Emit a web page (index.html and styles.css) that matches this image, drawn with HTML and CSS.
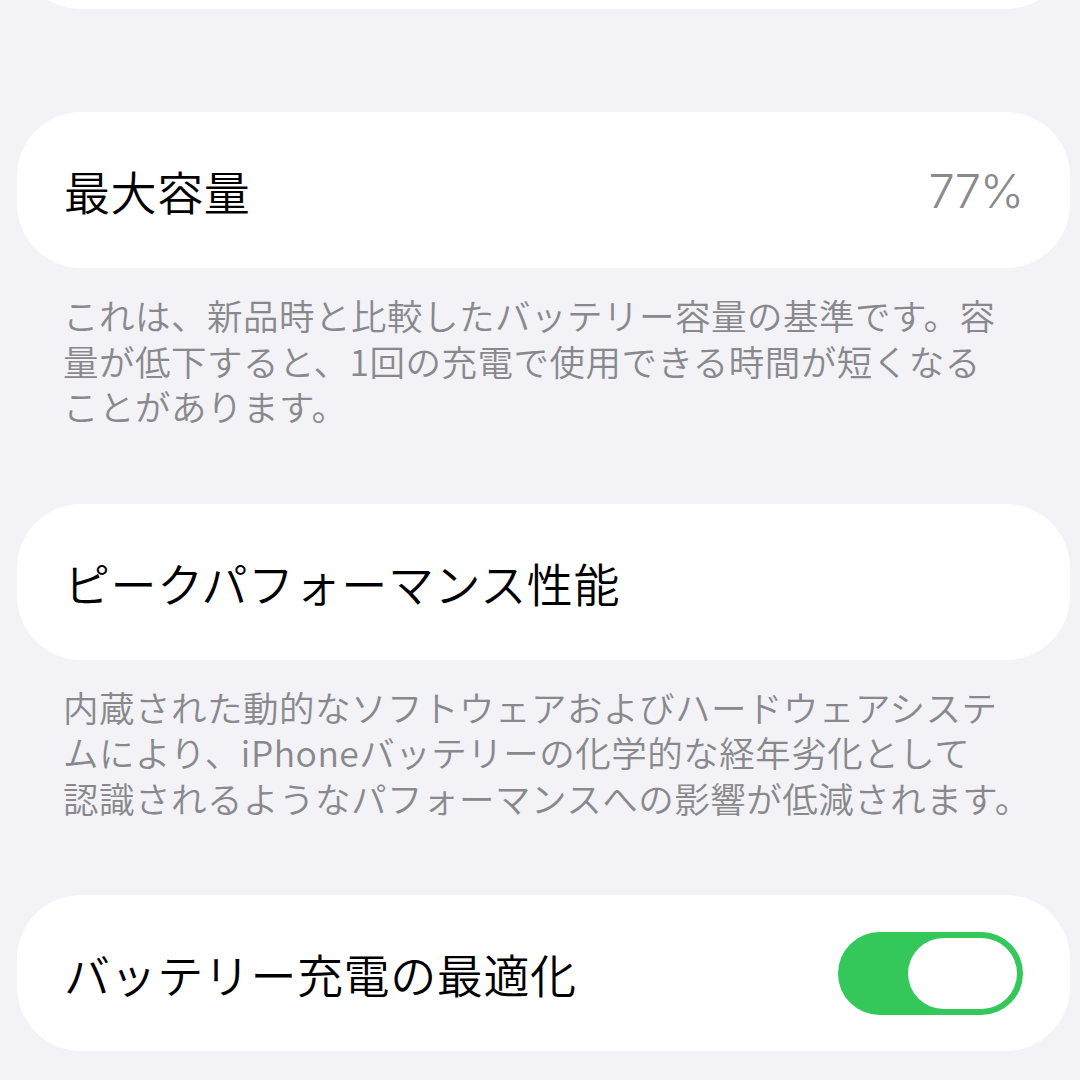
FILE: index.html
```html
<!DOCTYPE html>
<html lang="ja">
<head>
    <meta charset="UTF-8">
    <meta name="viewport" content="width=device-width, initial-scale=1.0">
    <title>バッテリーの状態</title>
    <link rel="stylesheet" href="styles.css">
</head>
<body>
    <div class="page">
        <div class="group group-top">
            <div class="card"></div>
        </div>

        <div class="group">
            <div class="card">
                <span class="label">最大容量</span>
                <span class="value">77%</span>
            </div>
            <p class="footer">これは、新品時と比較したバッテリー容量の基準です。容<br>量が低下すると、1回の充電で使用できる時間が短くなる<br>ことがあります。</p>
        </div>

        <div class="group">
            <div class="card">
                <span class="label">ピークパフォーマンス性能</span>
            </div>
            <p class="footer">内蔵された動的なソフトウェアおよびハードウェアシステ<br>ムにより、iPhoneバッテリーの化学的な経年劣化として<br>認識されるようなパフォーマンスへの影響が低減されます。</p>
        </div>

        <div class="group">
            <div class="card">
                <span class="label">バッテリー充電の最適化</span>
                <div class="toggle on">
                    <div class="knob"></div>
                </div>
            </div>
        </div>
    </div>
</body>
</html>
```

FILE: styles.css
```css
body {
    margin: 0;
    padding: 0;
    background-color: #f2f2f7;
    font-family: Inter, "Noto Sans CJK JP", sans-serif;
    color: #000;
    overflow: hidden;
}

.page {
    padding: 0 10px 0 17px;
}

.group {
    margin-bottom: 73px;
}

.group-top {
    margin-top: -147px;
    margin-bottom: 103px;
}

.card {
    height: 156px;
    background-color: #fff;
    border-radius: 64px;
    display: flex;
    align-items: center;
    justify-content: space-between;
    padding: 0 47px 0 47px;
    box-sizing: border-box;
}

.label {
    font-family: "Noto Sans CJK JP", sans-serif;
    font-size: 46px;
    font-weight: 350;
    letter-spacing: 0.6px;
}

.value {
    font-size: 47px;
    font-weight: 350;
    color: #8a8a8e;
    letter-spacing: -1px;
}

.footer {
    margin: 0;
    padding: 24px 0 2px 46px;
    font-family: "Noto Sans CJK JP", sans-serif;
    font-size: 35.5px;
    font-weight: 350;
    line-height: 45.5px;
    letter-spacing: 0.5px;
    color: #89898d;
    white-space: nowrap;
}

.toggle {
    width: 185px;
    height: 83px;
    border-radius: 42px;
    background-color: #e9e9ea;
    padding: 6px;
    box-sizing: border-box;
    display: flex;
}

.toggle.on {
    background-color: #34c759;
    justify-content: flex-end;
}

.knob {
    width: 109px;
    height: 71px;
    border-radius: 36px;
    background-color: #fff;
}
```
